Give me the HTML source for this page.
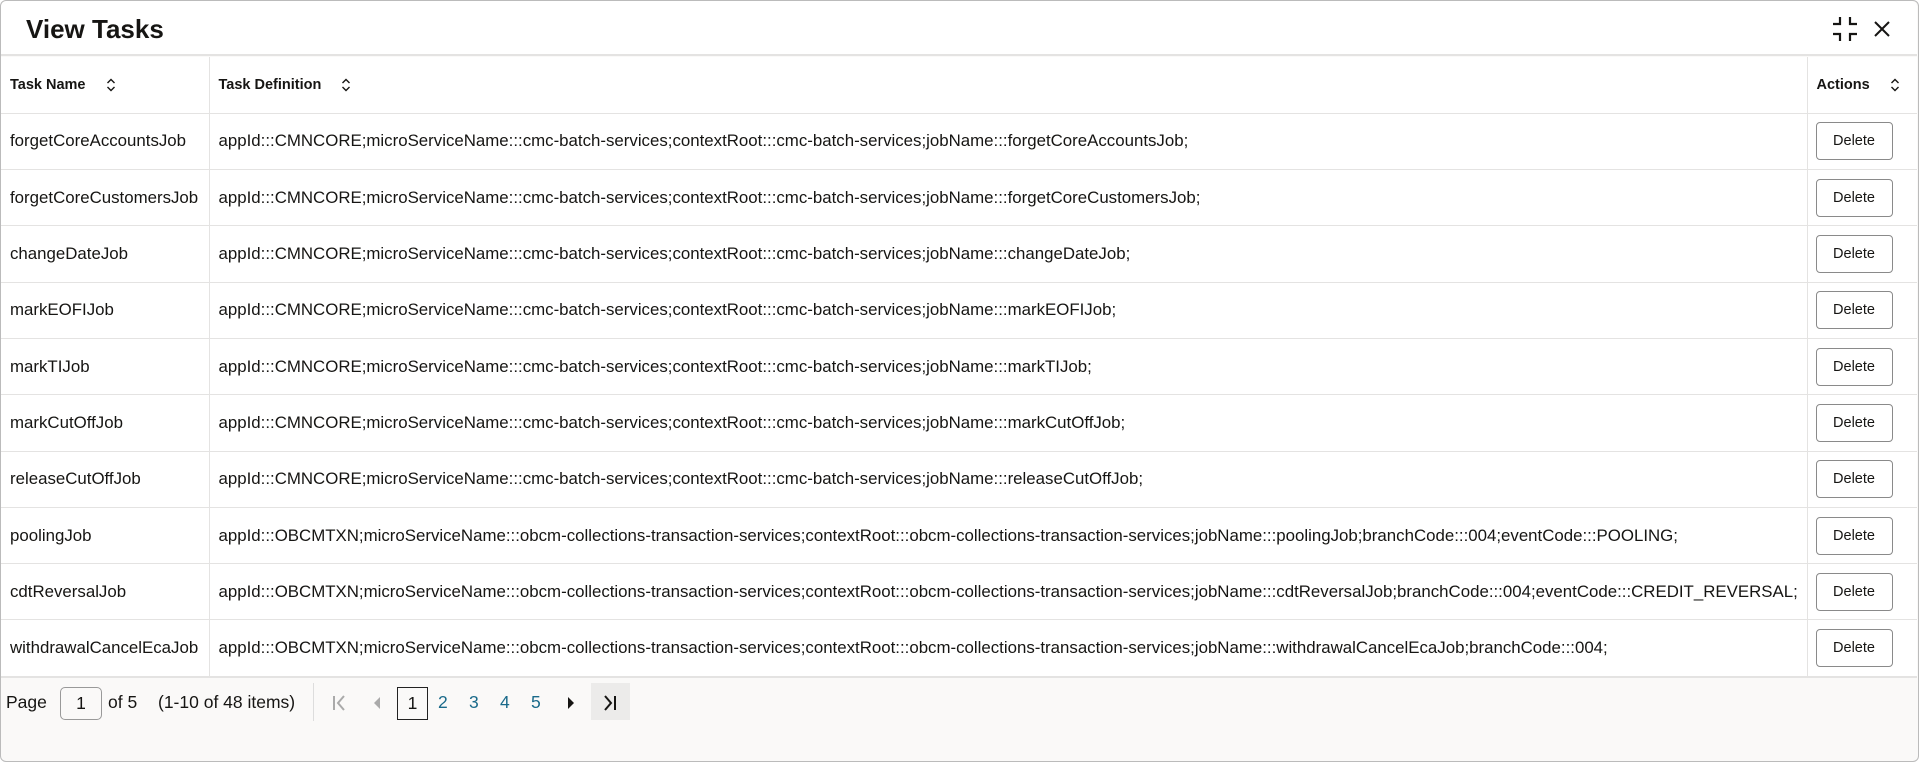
<!DOCTYPE html>
<html><head><style>
*{box-sizing:border-box;margin:0;padding:0}
body{width:1920px;height:763px;background:#fff;font-family:"Liberation Sans",sans-serif;color:#161513;overflow:hidden;position:relative}
.frame{position:absolute;left:0;top:0;width:1919px;height:762px;border:1px solid #bbb;border-radius:6px;background:#faf9f8}
.hdr{position:absolute;left:1px;top:1px;width:1916px;height:55px;background:#fff;border-bottom:2px solid #e4e3e2;border-radius:6px 6px 0 0}
.title{position:absolute;left:25px;top:13px;font-size:26px;font-weight:bold}
table{position:absolute;left:1px;top:57px;width:1916px;border-collapse:collapse;background:#fff;table-layout:fixed}
td,th{border-right:1px solid #e4e3e2;border-bottom:1px solid #e4e3e2;height:56.3px;padding:0 9px;font-size:16.85px;text-align:left;white-space:nowrap;overflow:hidden}
th{font-size:14.5px;font-weight:bold}
td:last-child,th:last-child{border-right:none}
.sort{display:inline-block;margin-left:20px;vertical-align:middle}
.btn{display:inline-block;border:1px solid #8a8a8a;border-radius:4px;width:77px;height:38px;line-height:36px;text-align:center;font-size:14.5px;margin-left:-1px}
.pg{position:absolute;top:687px;font-size:17.5px;line-height:31px}
</style></head><body>
<div class="frame"></div>
<div class="hdr"><div class="title">View Tasks</div>
<svg style="position:absolute;left:1831px;top:16px" width="26" height="24" viewBox="0 0 26 24" fill="none" stroke="#161513" stroke-width="2.2"><path d="M1 7h7V0M25 7h-7V0M1 17h7v7M25 17h-7v7"/></svg>
<svg style="position:absolute;left:1873px;top:20px" width="16" height="16" viewBox="0 0 16 16" stroke="#161513" stroke-width="2"><path d="M1 1l14 14M15 1L1 15"/></svg>
</div>
<table>
<colgroup><col style="width:208px"><col style="width:1598px"><col style="width:110px"></colgroup>
<tr><th>Task Name<svg class="sort" width="10" height="14" viewBox="0 0 10 14" fill="none" stroke="#161513" stroke-width="1.4"><path d="M1.5 5L5 1.5 8.5 5M1.5 9L5 12.5 8.5 9"/></svg></th><th>Task Definition<svg class="sort" width="10" height="14" viewBox="0 0 10 14" fill="none" stroke="#161513" stroke-width="1.4"><path d="M1.5 5L5 1.5 8.5 5M1.5 9L5 12.5 8.5 9"/></svg></th><th>Actions<svg class="sort" width="10" height="14" viewBox="0 0 10 14" fill="none" stroke="#161513" stroke-width="1.4"><path d="M1.5 5L5 1.5 8.5 5M1.5 9L5 12.5 8.5 9"/></svg></th></tr>
<tr><td>forgetCoreAccountsJob</td><td>appId:::CMNCORE;microServiceName:::cmc-batch-services;contextRoot:::cmc-batch-services;jobName:::forgetCoreAccountsJob;</td><td><span class="btn">Delete</span></td></tr>
<tr><td>forgetCoreCustomersJob</td><td>appId:::CMNCORE;microServiceName:::cmc-batch-services;contextRoot:::cmc-batch-services;jobName:::forgetCoreCustomersJob;</td><td><span class="btn">Delete</span></td></tr>
<tr><td>changeDateJob</td><td>appId:::CMNCORE;microServiceName:::cmc-batch-services;contextRoot:::cmc-batch-services;jobName:::changeDateJob;</td><td><span class="btn">Delete</span></td></tr>
<tr><td>markEOFIJob</td><td>appId:::CMNCORE;microServiceName:::cmc-batch-services;contextRoot:::cmc-batch-services;jobName:::markEOFIJob;</td><td><span class="btn">Delete</span></td></tr>
<tr><td>markTIJob</td><td>appId:::CMNCORE;microServiceName:::cmc-batch-services;contextRoot:::cmc-batch-services;jobName:::markTIJob;</td><td><span class="btn">Delete</span></td></tr>
<tr><td>markCutOffJob</td><td>appId:::CMNCORE;microServiceName:::cmc-batch-services;contextRoot:::cmc-batch-services;jobName:::markCutOffJob;</td><td><span class="btn">Delete</span></td></tr>
<tr><td>releaseCutOffJob</td><td>appId:::CMNCORE;microServiceName:::cmc-batch-services;contextRoot:::cmc-batch-services;jobName:::releaseCutOffJob;</td><td><span class="btn">Delete</span></td></tr>
<tr><td>poolingJob</td><td>appId:::OBCMTXN;microServiceName:::obcm-collections-transaction-services;contextRoot:::obcm-collections-transaction-services;jobName:::poolingJob;branchCode:::004;eventCode:::POOLING;</td><td><span class="btn">Delete</span></td></tr>
<tr><td>cdtReversalJob</td><td>appId:::OBCMTXN;microServiceName:::obcm-collections-transaction-services;contextRoot:::obcm-collections-transaction-services;jobName:::cdtReversalJob;branchCode:::004;eventCode:::CREDIT_REVERSAL;</td><td><span class="btn">Delete</span></td></tr>
<tr><td>withdrawalCancelEcaJob</td><td>appId:::OBCMTXN;microServiceName:::obcm-collections-transaction-services;contextRoot:::obcm-collections-transaction-services;jobName:::withdrawalCancelEcaJob;branchCode:::004;</td><td><span class="btn">Delete</span></td></tr>
</table>
<div style="position:absolute;left:1px;top:676px;width:1916px;height:2px;background:#e4e3e2"></div>
<div class="pg" style="left:6px">Page</div>
<div class="pg" style="left:60px;width:42px;height:33px;border:1px solid #999;border-radius:5px;text-align:center">1</div>
<div class="pg" style="left:108px">of 5</div>
<div class="pg" style="left:158px">(1-10 of 48 items)</div>
<div style="position:absolute;left:313px;top:683px;width:1px;height:38px;background:#ddd"></div>
<svg style="position:absolute;left:332px;top:695px" width="14" height="16" viewBox="0 0 14 16" fill="none" stroke="#aaa" stroke-width="2"><path d="M2 1v14M12 1L6 8l6 7"/></svg>
<svg style="position:absolute;left:373px;top:697px" width="8" height="12" viewBox="0 0 8 12" fill="#aaa"><path d="M7 0v12L1 6z"/></svg>
<div class="pg" style="left:397px;width:31px;height:33px;border:1.5px solid #222;text-align:center">1</div>
<div class="pg" style="left:438px;color:#1a6a8a">2</div>
<div class="pg" style="left:469px;color:#1a6a8a">3</div>
<div class="pg" style="left:500px;color:#1a6a8a">4</div>
<div class="pg" style="left:531px;color:#1a6a8a">5</div>
<svg style="position:absolute;left:567px;top:697px" width="8" height="12" viewBox="0 0 8 12" fill="#161513"><path d="M1 0v12l6-6z"/></svg>
<div style="position:absolute;left:591px;top:683px;width:39px;height:37px;background:#ecebea"></div>
<svg style="position:absolute;left:603px;top:695px" width="14" height="16" viewBox="0 0 14 16" fill="none" stroke="#161513" stroke-width="2"><path d="M12 1v14M2 1l6 7-6 7"/></svg>
</body></html>
